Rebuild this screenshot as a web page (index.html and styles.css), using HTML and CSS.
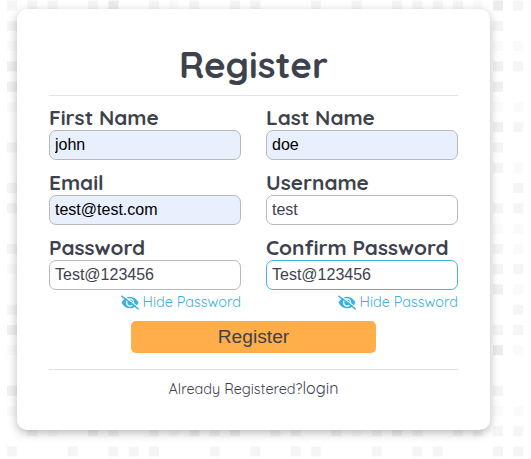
FILE: index.html
```html
<!DOCTYPE html>
<html lang="en">
<head>
<meta charset="utf-8">
<title>Register</title>
<link rel="stylesheet" href="styles.css">
</head>
<body>
<svg class="pattern" width="531" height="459" aria-hidden="true">
  <g id="tiles"></g>
</svg>
<main class="card">
  <h1 class="title">Register</h1>
  <form class="form">
    <div class="fields">
      <div class="field"><label class="label" for="first">First Name</label><input class="input filled" id="first" value="john"></div>
      <div class="field"><label class="label" for="last">Last Name</label><input class="input filled" id="last" value="doe"></div>
      <div class="field"><label class="label" for="email">Email</label><input class="input filled" id="email" value="test@test.com"></div>
      <div class="field"><label class="label" for="user">Username</label><input class="input" id="user" value="test"></div>
      <div class="field"><label class="label" for="pass">Password</label><input class="input" id="pass" value="Test@123456">
        <a class="toggle"><svg class="eye" viewBox="0 0 640 512"><use href="#eye-slash"/></svg><span>Hide Password</span></a></div>
      <div class="field"><label class="label" for="confirm">Confirm Password</label><input class="input active" id="confirm" value="Test@123456">
        <a class="toggle"><svg class="eye" viewBox="0 0 640 512"><use href="#eye-slash"/></svg><span>Hide Password</span></a></div>
    </div>
    <button class="submit" type="button">Register</button>
  </form>
  <p class="footer"><span class="question">Already Registered?</span><a class="login">login</a></p>
</main>
<svg class="defs" width="0" height="0" aria-hidden="true">
  <symbol id="eye-slash" viewBox="0 0 640 512">
    <path fill="currentColor" fill-rule="evenodd" d="M320 48C197 48 90 130 25 241a32 32 0 0 0 0 30C90 382 197 464 320 464s230-82 295-193a32 32 0 0 0 0-30C550 130 443 48 320 48zm0 60a148 148 0 1 1 0 296 148 148 0 0 1 0-296zm0 44a104 104 0 0 0-25 4 48 48 0 0 1-67 67 104 104 0 1 0 92-71z"/>
    <path stroke="#fff" stroke-width="40" d="M52 -16 652 448"/>
    <path stroke="currentColor" stroke-width="50" stroke-linecap="round" d="M24 28 616 484"/>
  </symbol>
</svg>
<script src="pattern.js"></script>
</body>
</html>
```
FILE: pattern.js
```js
// Each row of the backdrop: 1 = faintest tile, 4 = darkest, . = empty
const rows = [
  "222.24.212.22..2.2.2222142",
  "2.......................2.",
  "1.......................11",
  "3.......................32",
  "3.......................3.",
  "1.......................11",
  "........................32",
  "2.......................2.",
  "........................21",
  "2........................2",
  "2.......................22",
  "........................11",
  "2.......................21",
  "1.......................22",
  "........................31",
  "2........................2",
  "3.......................22",
  "1.......................41",
  "..........................",
  "3.......................2.",
  "1.......................11",
  ".21.32.21323.22.21232.2222",
  "2..2.222..2.2.22..2.22..22"
];
const pitch = 20.27;
const group = document.getElementById("tiles");
rows.forEach((row, r) => {
  [...row].forEach((tone, c) => {
    if (tone === ".") return;
    const tile = document.createElementNS("http://www.w3.org/2000/svg", "rect");
    tile.setAttribute("x", (c > 22 ? 6.6 : 7) + c * pitch);
    tile.setAttribute("y", 0.6 + r * pitch);
    tile.setAttribute("width", 10);
    tile.setAttribute("height", 10);
    tile.setAttribute("class", "tone-" + tone);
    group.append(tile);
  });
});
```
FILE: styles.css
```css
* { box-sizing: border-box; }
body {
  margin: 0;
  padding: 9px 41px 29px 17px;
  background: #fff;
  color: #3d424d;
  font-family: Quicksand, Lato, sans-serif;
  overflow: hidden;
}
.pattern { position: absolute; left: 0; top: 0; z-index: -1; }
.defs { position: absolute; }
.tone-1 { fill: #fafafa; }
.tone-2 { fill: #f5f5f5; }
.tone-3 { fill: #f1f1f1; }
.tone-4 { fill: #ececec; }
.card {
  width: 473px;
  height: 421px;
  padding: 32px;
  border-radius: 10px;
  background: #fff;
  box-shadow: 0 3px 10px rgba(0, 0, 0, .28);
}
.title {
  height: 55px;
  margin: 0;
  border-bottom: 1px solid #e3e3e0;
  font-size: 36.8px;
  line-height: 46px;
  font-weight: 700;
  text-align: center;
}
.fields {
  display: grid;
  grid-template-columns: 192px 192px;
  grid-auto-rows: 65px;
  column-gap: 25px;
  padding-top: 10px;
}
.field { display: flex; flex-direction: column; }
.label {
  height: 24px;
  flex: none;
  font-size: 20.8px;
  line-height: 22px;
  font-weight: 700;
  white-space: nowrap;
}
.input {
  width: 100%;
  height: 30px;
  flex: none;
  padding: 0 5px 1px;
  border: 1px solid #b9b9b9;
  border-radius: 7px;
  outline: 0;
  background: #fff;
  color: #3d424d;
  font: 16px "Liberation Sans", sans-serif;
}
.filled { background: #e8effd; color: #000; }
.active { border-color: #42b4df; }
.toggle {
  display: flex;
  justify-content: flex-end;
  align-items: center;
  gap: 4px;
  height: 24px;
  flex: none;
  color: #3bb1e0;
  font-size: 14.4px;
  line-height: 24px;
  white-space: nowrap;
}
.eye { width: 18px; height: 15px; }
.submit {
  display: block;
  width: 245px;
  height: 32px;
  margin: 20px auto 0;
  padding: 0;
  border: 0;
  border-radius: 5px;
  background: #ffae49;
  color: #3d424d;
  font: 19.2px/32px "Liberation Sans", sans-serif;
}
.footer {
  display: flex;
  justify-content: center;
  align-items: baseline;
  margin: 16px 0 0;
  padding-top: 6px;
  border-top: 1px solid #e3e3e0;
  line-height: 24px;
}
.question { font-size: 14.4px; }
.login { font-size: 16px; }
```
